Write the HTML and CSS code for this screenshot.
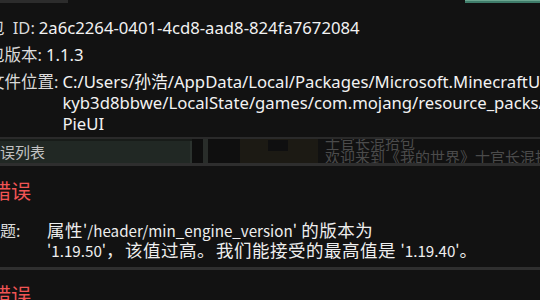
FILE: index.html
```html
<!DOCTYPE html>
<html lang="zh-CN">
<head>
<meta charset="utf-8">
<link rel="stylesheet" href="styles.css">
</head>
<body>
<div class="topbar"><div class="tab-grey"></div><div class="tab-teal"></div></div>
<section class="details">
  <div class="row"><span class="label">包&ensp;ID:</span><span class="value">2a6c2264-0401-4cd8-aad8-824fa7672084</span></div>
  <div class="row"><span class="label">包版本:</span><span class="value">1.1.3</span></div>
  <div class="row"><span class="label">文件位置:</span><span class="value">C:/Users/孙浩/AppData/Local/Packages/Microsoft.MinecraftUWP_8we<br>kyb3d8bbwe/LocalState/games/com.mojang/resource_packs/<br>PieUI</span></div>
</section>
<div class="band">
  <div class="list-tab"><span>错误列表</span></div>
  <div class="sp1"></div>
  <div class="edge"></div>
  <div class="sp2"></div>
  <div class="thumb"></div>
  <div class="sp3"></div>
  <div class="pack-text"><div>士官长混拾包</div><div>欢迎来到《我的世界》士官长混拾包</div></div>
</div>
<section class="errors">
  <div class="error">
    <div class="err-title">错误</div>
    <div class="err-row"><span class="err-label">标题:</span><span class="err-value">属性<span class="lat">'/header/min_engine_version'</span> 的版本为<br><span class="lat">'1.19.50'</span><span class="punct">，</span>该值过高<span class="punct">。</span>我们能接受的最高值是 <span class="lat">'1.19.40'</span>。</span></div>
  </div>
  <div class="error">
    <div class="err-title">错误</div>
  </div>
</section>
</body>
</html>
```
FILE: styles.css
```css
html, body {
  margin: 0;
  padding: 0;
}
body {
  width: 540px;
  height: 300px;
  overflow: hidden;
  background: #121212;
  color: #f0f0f0;
  font-family: "Noto Sans", "Noto Sans CJK SC", sans-serif;
}
.topbar {
  display: flex;
  justify-content: space-between;
  height: 3px;
}
.tab-grey {
  width: 68px;
  background: #2c2c2c;
}
.tab-teal {
  width: 75px;
  background: linear-gradient(#6aa690 0 1px, #3f7c6a 1px);
}
.details {
  height: 134px;
  box-sizing: border-box;
  padding-top: 14px;
  margin-left: -12px;
  white-space: nowrap;
}
.row {
  display: flex;
  gap: 4px;
  line-height: 21px;
  margin-bottom: 6px;
}
.label {
  font-size: 16.5px;
  color: #dadada;
}
.value {
  font-size: 16.7px;
  color: #f2f2f2;
}
.band {
  display: flex;
  height: 24px;
  border-top: 2px solid #2a2a2a;
  border-bottom: 3px solid #2e2e2e;
  overflow: hidden;
  background: #111;
}
.list-tab {
  width: 192px;
  flex: none;
  box-sizing: border-box;
  background: #212824;
  border-top: 2px solid #181c19;
  box-shadow: inset -2px 0 #2b322e;
  color: #c2c2c2;
  font-family: "Noto Sans CJK SC", sans-serif;
  font-size: 15px;
  line-height: 22px;
  overflow: hidden;
  white-space: nowrap;
}
.list-tab span {
  margin-left: -15px;
}
.sp1 { width: 11px; flex: none; background: #0e0e0e; }
.edge { width: 5px; flex: none; background: #292d2a; }
.sp2 { width: 32px; flex: none; background: #0f0f0f; }
.thumb {
  width: 78px;
  flex: none;
  background: linear-gradient(#0f0f10, #0f0f10) 28px 1px / 20px 11px no-repeat, #1c1a14;
}
.sp3 { width: 7px; flex: none; }
.pack-text {
  color: #4b4b4b;
  font-family: "Noto Sans CJK SC", sans-serif;
  font-size: 15px;
  line-height: 14px;
  margin-top: -3px;
  white-space: nowrap;
}
.error {
  height: 104px;
  box-sizing: border-box;
  padding-top: 13px;
  border-bottom: 3px solid #2f2f2f;
}
.err-title {
  margin-left: -9px;
  color: #f05555;
  font-family: "Noto Sans CJK SC", sans-serif;
  font-size: 20px;
  line-height: 24px;
}
.err-row {
  display: grid;
  grid-template-columns: 63px auto;
  margin-top: 17px;
  margin-left: -16px;
  white-space: nowrap;
  line-height: 20px;
  font-family: "Noto Sans CJK SC", sans-serif;
}
.err-label {
  font-size: 16px;
  color: #dadada;
}
.err-value {
  font-size: 17.5px;
  letter-spacing: 0.5px;
  color: #eeeeee;
}
.err-value .lat {
  font-size: 15.2px;
  letter-spacing: 0;
}
.err-value .punct {
  margin-right: 1px;
}
```
